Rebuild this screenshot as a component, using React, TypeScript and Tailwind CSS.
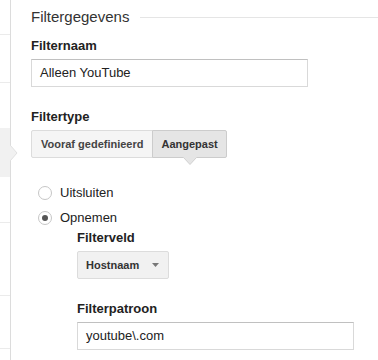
import React from 'react';

const font = { fontFamily: '"Liberation Sans", Arial, sans-serif' };

function Sidebar() {
  return (
    <div className="w-[11px] shrink-0 border-r border-[#dcdcdc] flex flex-col">
      <div className="h-[35px] border-b border-[#ebebeb]" />
      <div className="h-[48px] border-b border-[#ebebeb]" />
      <div className="h-[45px]" />
      <div className="h-[49px] bg-[#f1f1f1] relative">
        <svg className="absolute left-[10px] top-[17px]" width="9" height="16" viewBox="0 0 9 16">
          <polygon points="0,0 7,8 0,16" fill="#f1f1f1" />
          <polyline points="0,0 7,8 0,16" fill="none" stroke="#e0e0e0" strokeWidth="1" />
        </svg>
      </div>
      <div className="h-[46px] border-b border-[#ebebeb]" />
      <div className="h-[73px] border-b border-[#ebebeb]" />
      <div className="h-[53px] border-b border-[#ebebeb]" />
    </div>
  );
}

function Label({ children, className = '' }: { children: React.ReactNode; className?: string }) {
  return <div className={`text-[13px] leading-[16px] font-bold text-[#222] ${className}`}>{children}</div>;
}

function TextInput({ value }: { value: string }) {
  return (
    <div className="mt-[5px] w-[277px] h-[28px] border border-[#d9d9d9] border-t-[#c0c0c0] bg-white px-[8px] flex items-center text-[13px] text-[#222]">
      {value}
    </div>
  );
}

function Radio({ label, checked }: { label: string; checked?: boolean }) {
  return (
    <div className="flex items-center h-[16px] pl-[7px] gap-[8px]">
      <span className="w-[14px] h-[14px] rounded-full border border-[#c6c6c6] bg-white flex items-center justify-center">
        {checked && <span className="w-[6px] h-[6px] rounded-full bg-[#555]" />}
      </span>
      <span className="text-[13px] leading-[16px] text-[#222]">{label}</span>
    </div>
  );
}

export default function App() {
  return (
    <div className="w-[378px] h-[360px] overflow-hidden bg-white flex" style={font}>
      <Sidebar />
      <div className="flex-1 pl-[20px] pt-[8px]">
        <div className="flex items-center">
          <span className="text-[15px] leading-[18px] text-[#333]">Filtergegevens</span>
          <span className="ml-[11px] flex-1 h-px bg-[#e5e5e5] mt-px" />
        </div>

        <Label className="mt-[12px]">Filternaam</Label>
        <TextInput value="Alleen YouTube" />

        <Label className="mt-[22px]">Filtertype</Label>
        <div className="mt-[5px] flex">
          <div className="h-[28px] px-[9px] flex items-center bg-[#f5f5f5] border border-[#dcdcdc] rounded-l-[2px] text-[11px] font-bold text-[#444]">
            Vooraf gedefinieerd
          </div>
          <div className="relative h-[28px] px-[8px] -ml-px flex items-center bg-[#e5e5e5] border border-[#ccc] rounded-r-[2px] text-[11px] font-bold text-[#333]">
            Aangepast
            <svg className="absolute left-1/2 -translate-x-1/2 top-[26px]" width="14" height="9" viewBox="0 0 14 9">
              <polygon points="0,0 7,7.5 14,0" fill="#e5e5e5" />
              <polyline points="0.5,0.5 7,7.5 13.5,0.5" fill="none" stroke="#d0d0d0" strokeWidth="1" />
            </svg>
          </div>
        </div>

        <div className="mt-[27px] flex flex-col gap-[9px]">
          <Radio label="Uitsluiten" />
          <Radio label="Opnemen" checked />
        </div>

        <div className="pl-[46px]">
          <Label className="mt-[4px]">Filterveld</Label>
          <div className="mt-[5px] w-[92px] h-[28px] border border-[#dcdcdc] bg-[#f1f1f1] rounded-[2px] pl-[8px] pr-[9px] flex items-center justify-between">
            <span className="text-[11px] font-bold text-[#333]">Hostnaam</span>
            <svg width="7" height="4" viewBox="0 0 7 4">
              <polygon points="0,0 7,0 3.5,4" fill="#777" />
            </svg>
          </div>

          <Label className="mt-[22px]">Filterpatroon</Label>
          <TextInput value="youtube\.com" />
        </div>
      </div>
    </div>
  );
}
